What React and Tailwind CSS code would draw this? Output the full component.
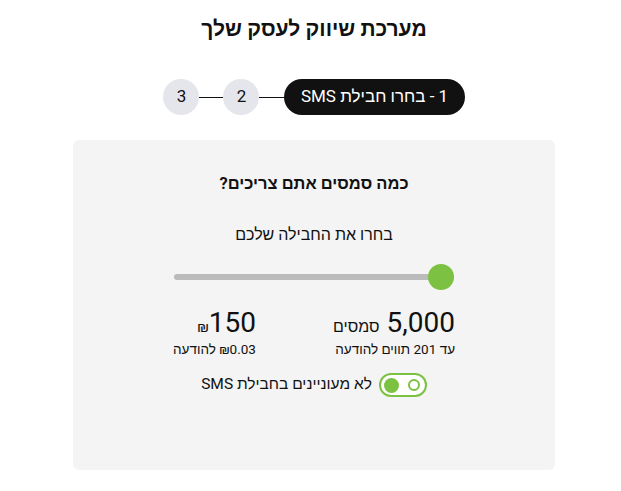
export default function App() {
    return (
        <div
            dir="rtl"
            className="w-[621px] h-[491px] bg-white text-[#111] pl-[7px] pt-[15px]"
            style={{ fontFamily: "Roboto, 'Liberation Sans', sans-serif" }}
        >
            {/* כותרת */}
            <h1 className="text-center text-[21px] font-bold leading-[28px]">מערכת שיווק לעסק שלך</h1>

            {/* שלבים */}
            <div className="flex justify-center items-center mt-[36px]">
                <div className="h-[36px] px-[16.5px] rounded-full bg-[#111] text-white text-[17px] flex items-center">
                    1 - בחרו חבילת SMS
                </div>
                <div className="w-[25px] h-px bg-[#111]" />
                <div className="w-[36px] h-[36px] rounded-full bg-[#e4e6eb] flex items-center justify-center text-[17px]">2</div>
                <div className="w-[24px] h-px bg-[#111]" />
                <div className="w-[36px] h-[36px] rounded-full bg-[#e4e6eb] flex items-center justify-center text-[17px]">3</div>
            </div>

            {/* כרטיס */}
            <div className="w-[482px] h-[330px] mx-auto mt-[25px] bg-[#f4f4f4] rounded-[6px] pt-[33px] flex flex-col items-center">
                <h2 className="text-[16.5px] font-bold leading-[22px]">כמה סמסים אתם צריכים?</h2>
                <p className="text-[16px] leading-[22px] mt-[29px]">בחרו את החבילה שלכם</p>

                {/* סליידר */}
                <div className="w-[280px] h-[26px] mt-[18px] relative flex items-center">
                    <div className="w-full h-[6px] rounded-full bg-[#bbbbbb]" />
                    <div className="absolute right-0 top-0 w-[26px] h-[26px] rounded-full bg-[#7cc142]" />
                </div>

                {/* נתונים */}
                <div className="w-[282px] flex justify-between mt-[16px]">
                    <div className="text-right">
                        <div className="flex items-baseline gap-[7px]">
                            <span className="text-[28px] leading-[34px]">5,000</span>
                            <span className="text-[16px]">סמסים</span>
                        </div>
                        <div className="text-[13.5px] leading-[18px]">עד 201 תווים להודעה</div>
                    </div>
                    <div className="text-right">
                        <div className="flex items-baseline">
                            <span className="text-[28px] leading-[34px]">150</span>
                            <span className="text-[15px]">₪</span>
                        </div>
                        <div className="text-[13.5px] leading-[18px]">₪0.03 להודעה</div>
                    </div>
                </div>

                {/* מתג */}
                <div className="flex items-center gap-[7px] mt-[15px]">
                    <div className="w-[48px] h-[24px] rounded-full border-2 border-[#7cc142] bg-white flex items-center justify-between pr-[5px] pl-[3px]">
                        <div className="w-[12px] h-[12px] rounded-full border-2 border-[#7cc142]" />
                        <div className="w-[15px] h-[15px] rounded-full bg-[#7cc142]" />
                    </div>
                    <span className="text-[15.5px]">לא מעוניינים בחבילת SMS</span>
                </div>
            </div>
        </div>
    );
}
